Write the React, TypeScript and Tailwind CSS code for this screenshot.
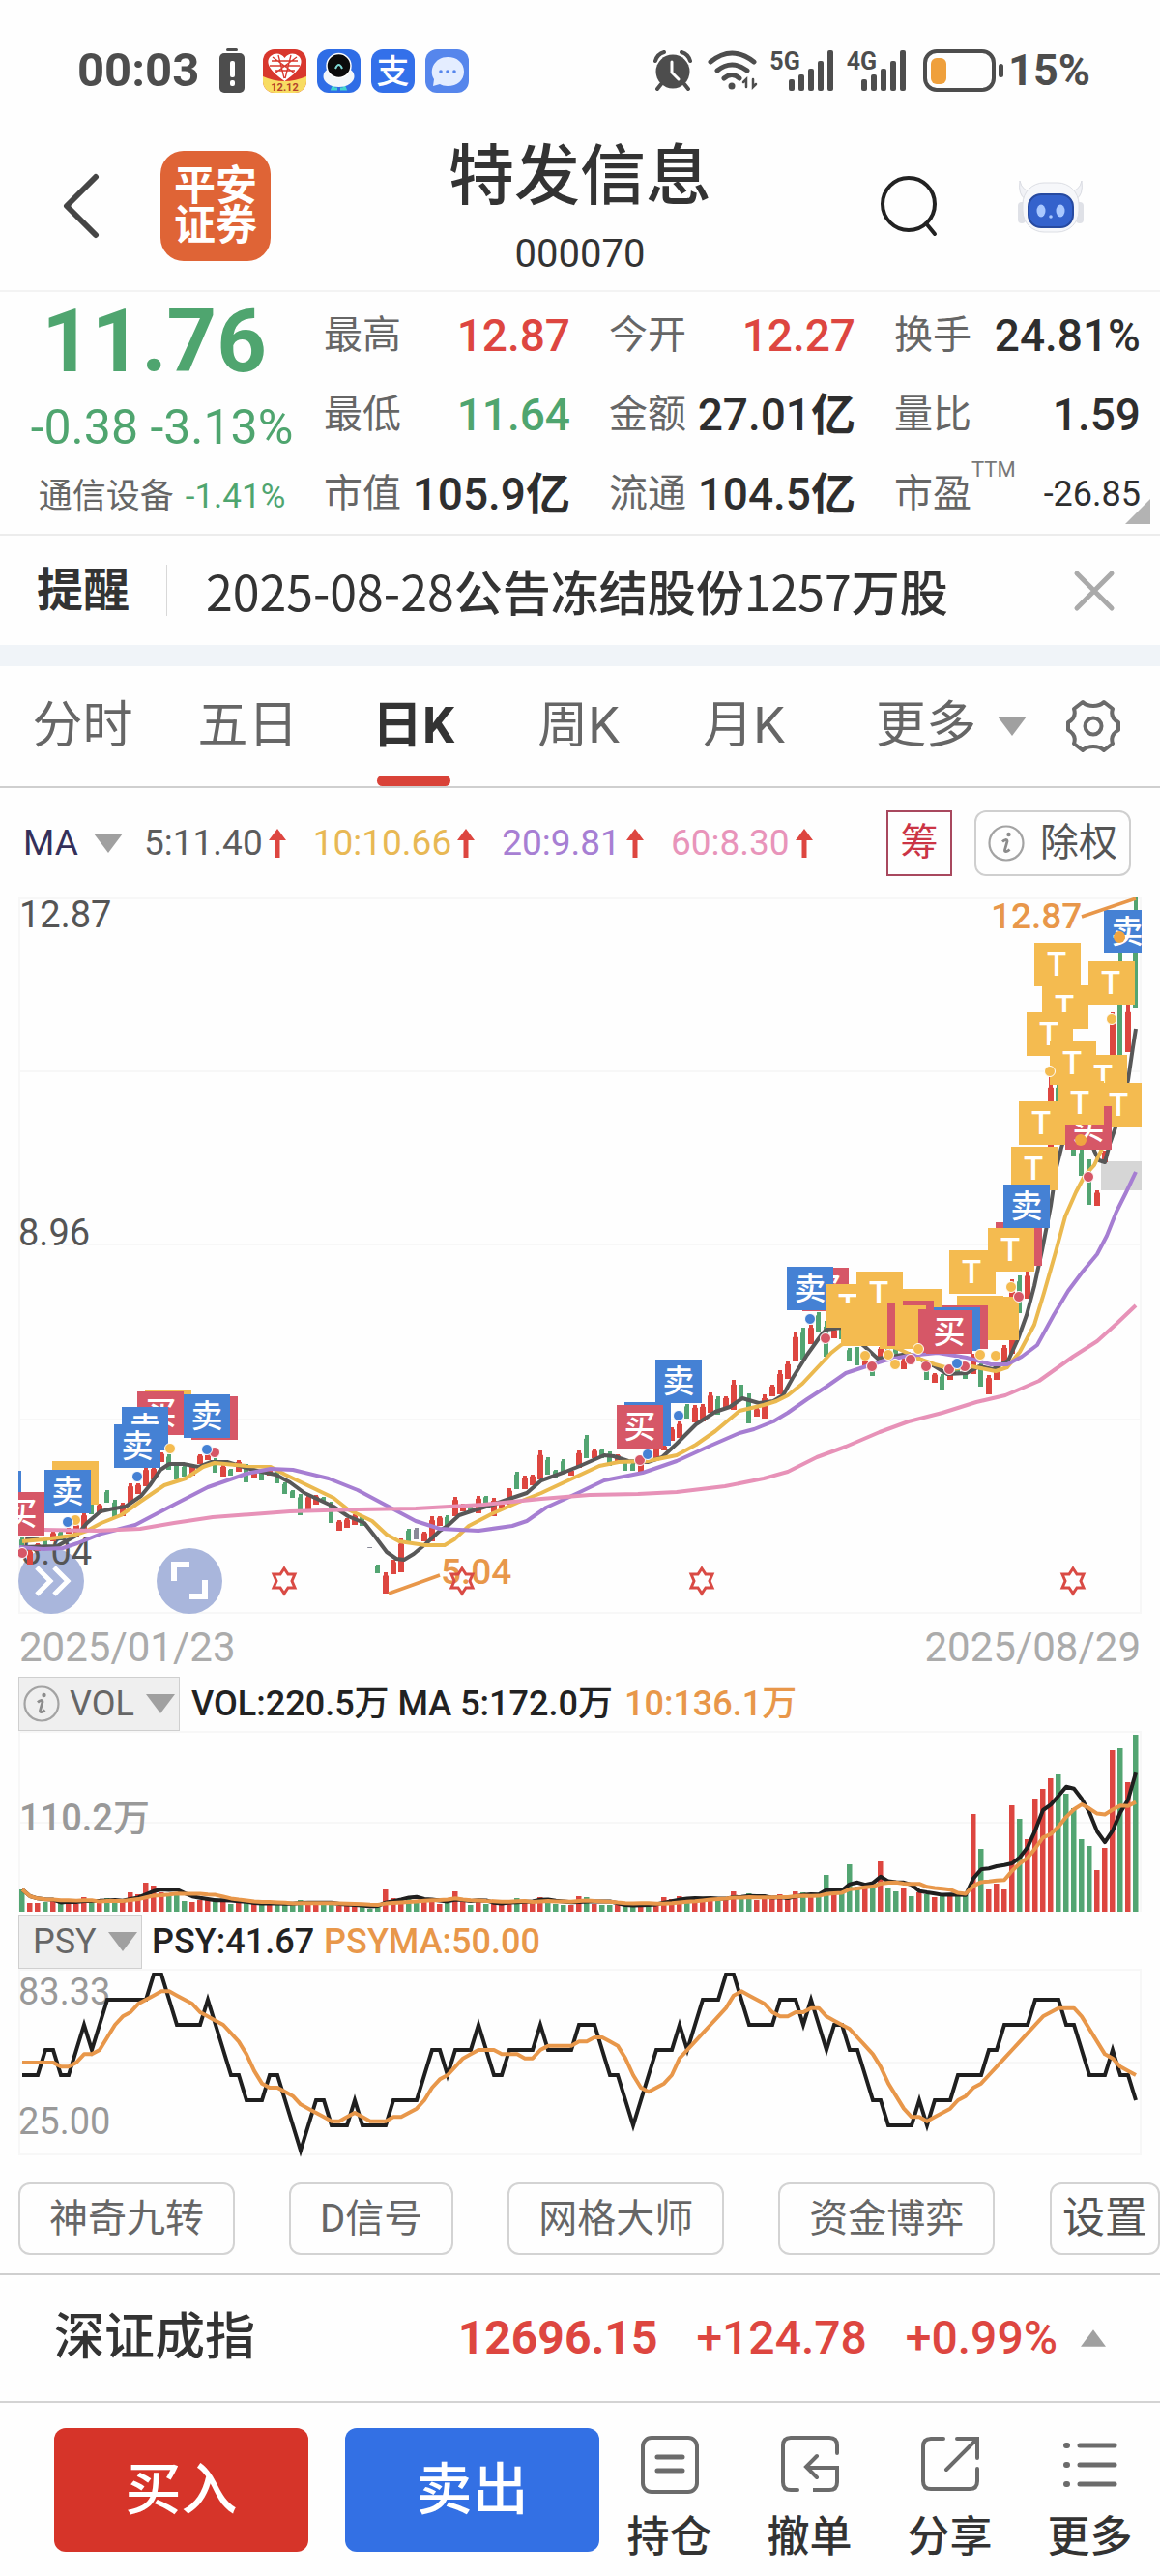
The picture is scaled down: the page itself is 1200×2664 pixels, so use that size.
import { useState } from "react";

const RED = "#dd4640";
const GREEN = "#53a572";
const ORANGE = "#e8974a";
const YELLOW = "#f4bb50";

const toneClass: Record<string, string> = {
    up: "text-[#dd4640]",
    down: "text-[#4fa56f]",
    flat: "text-[#2e2e2e]",
};

const stats = [
    { label: "最高", value: "12.87", tone: "up" },
    { label: "今开", value: "12.27", tone: "up" },
    { label: "换手", value: "24.81%", tone: "flat" },
    { label: "最低", value: "11.64", tone: "down" },
    { label: "金额", value: "27.01", unit: "亿", tone: "flat" },
    { label: "量比", value: "1.59", tone: "flat" },
    { label: "市值", value: "105.9", unit: "亿", tone: "flat" },
    { label: "流通", value: "104.5", unit: "亿", tone: "flat" },
    { label: "市盈", value: "-26.85", tone: "flat", note: "TTM", small: true },
];

const tabs = ["分时", "五日", "日K", "周K", "月K"];

const averages = [
    { text: "5:11.40", color: "text-[#5c5c5c]" },
    { text: "10:10.66", color: "text-[#e8b854]" },
    { text: "20:9.81", color: "text-[#a77fd3]" },
    { text: "60:8.30", color: "text-[#e894ba]" },
];

// one row per trading day: direction, top, bottom, volume
type Day = [string, number, number, number];
const days: Day[] = [
    ["g", 1590, 1604, 23], ["r", 1602, 1618, 9], ["r", 1596, 1604, 9], ["g", 1592, 1598, 10], ["r", 1584, 1594, 11],
    ["g", 1584, 1592, 9], ["r", 1580, 1586, 12], ["r", 1575, 1590, 8], ["r", 1564, 1584, 15], ["g", 1556, 1566, 11],
    ["r", 1555, 1565, 10], ["g", 1541, 1554, 14], ["g", 1551, 1569, 10], ["r", 1554, 1568, 11], ["r", 1534, 1554, 20],
    ["r", 1534, 1545, 18], ["r", 1517, 1537, 30], ["r", 1517, 1530, 27], ["r", 1502, 1512, 20], ["g", 1504, 1520, 18],
    ["g", 1513, 1530, 20], ["g", 1515, 1527, 11], ["r", 1514, 1526, 10], ["r", 1504, 1514, 12], ["r", 1504, 1510, 12],
    ["g", 1508, 1523, 14], ["r", 1515, 1527, 11], ["g", 1519, 1526, 8], ["r", 1510, 1522, 9], ["g", 1514, 1533, 9],
    ["r", 1520, 1528, 8], ["g", 1521, 1531, 8], ["r", 1520, 1526, 8], ["g", 1522, 1534, 9], ["g", 1533, 1545, 8],
    ["g", 1541, 1549, 8], ["g", 1545, 1567, 12], ["r", 1546, 1562, 9], ["r", 1546, 1556, 9], ["g", 1548, 1554, 8],
    ["g", 1553, 1575, 8], ["r", 1572, 1583, 6], ["r", 1570, 1580, 6], ["r", 1566, 1577, 7], ["g", 1567, 1578, 5],
    ["n", 1600, 1601, 3], ["g", 1618, 1627, 9], ["r", 1626, 1648, 23], ["r", 1613, 1628, 14], ["r", 1591, 1626, 14],
    ["g", 1581, 1594, 13], ["n", 1580, 1592, 12], ["r", 1584, 1594, 12], ["r", 1568, 1594, 12], ["r", 1568, 1578, 8],
    ["g", 1567, 1579, 9], ["r", 1548, 1568, 21], ["r", 1555, 1563, 10], ["g", 1557, 1564, 7], ["r", 1547, 1565, 12],
    ["g", 1547, 1555, 8], ["r", 1549, 1568, 9], ["r", 1555, 1559, 7], ["r", 1539, 1556, 11], ["g", 1522, 1540, 14],
    ["r", 1526, 1540, 10], ["r", 1525, 1536, 11], ["r", 1500, 1530, 15], ["g", 1507, 1525, 12], ["g", 1520, 1528, 8],
    ["g", 1509, 1523, 7], ["r", 1520, 1526, 7], ["r", 1500, 1518, 16], ["g", 1484, 1508, 15], ["r", 1499, 1508, 8],
    ["g", 1498, 1508, 7], ["g", 1501, 1516, 7], ["r", 1504, 1512, 7], ["g", 1510, 1521, 6], ["g", 1513, 1521, 6],
    ["r", 1512, 1522, 8], ["g", 1506, 1513, 8], ["r", 1497, 1508, 10], ["r", 1495, 1500, 15], ["r", 1476, 1490, 13],
    ["r", 1470, 1487, 16], ["g", 1452, 1467, 13], ["r", 1453, 1471, 13], ["r", 1452, 1470, 14], ["r", 1440, 1461, 14],
    ["g", 1444, 1463, 13], ["r", 1444, 1456, 13], ["r", 1427, 1458, 21], ["g", 1432, 1446, 15], ["g", 1441, 1472, 19],
    ["r", 1456, 1465, 12], ["r", 1442, 1467, 13], ["r", 1432, 1444, 13], ["r", 1417, 1442, 18], ["r", 1408, 1426, 14],
    ["r", 1378, 1408, 21], ["g", 1373, 1406, 20], ["r", 1370, 1390, 17], ["g", 1357, 1378, 17], ["g", 1366, 1403, 38],
    ["r", 1374, 1384, 19], ["g", 1370, 1385, 19], ["g", 1394, 1408, 49], ["g", 1393, 1412, 26], ["r", 1400, 1412, 26],
    ["g", 1415, 1423, 28], ["r", 1393, 1405, 52], ["g", 1385, 1400, 25], ["g", 1385, 1400, 21], ["r", 1405, 1416, 25],
    ["g", 1385, 1395, 16], ["r", 1385, 1395, 20], ["g", 1416, 1427, 18], ["r", 1420, 1430, 15], ["g", 1421, 1437, 18],
    ["r", 1416, 1427, 18], ["g", 1410, 1420, 18], ["g", 1414, 1426, 17], ["r", 1400, 1421, 101], ["g", 1410, 1434, 65],
    ["r", 1422, 1442, 23], ["r", 1410, 1427, 29], ["r", 1391, 1410, 23], ["r", 1323, 1400, 110], ["g", 1319, 1358, 96],
    ["r", 1315, 1343, 75], ["r", 1240, 1260, 117], ["r", 1150, 1180, 127], ["r", 1113, 1187, 138], ["g", 1122, 1140, 142],
    ["g", 1120, 1150, 122], ["g", 1180, 1196, 107], ["g", 1188, 1216, 75], ["g", 1199, 1246, 68], ["r", 1231, 1247, 43],
    ["r", 1190, 1202, 66], ["r", 1047, 1091, 167], ["g", 986, 1091, 169], ["r", 1039, 1088, 134], ["g", 928, 1042, 183],
];

const dayX = (index: number) => 23 + index * 8;
const dayColor = (dir: string) => (dir == "r" ? RED : dir == "g" ? GREEN : "#8a8a98");

const ma5 = "23,1600 59,1599 79,1588 90,1575 104,1563 118,1560 130,1558 146,1547 155,1536 166,1520 175,1514 190,1514 205,1517 218,1512 235,1512 255,1518 270,1522 285,1525 300,1533 315,1544 330,1551 345,1558 360,1568 377,1575 388,1589 400,1605 410,1612 418,1613 428,1607 440,1597 455,1583 463,1578 475,1567 490,1562 510,1556 530,1549 545,1544 560,1531 585,1522 600,1516 625,1505 635,1506 650,1511 670,1512 685,1507 700,1493 720,1473 740,1460 755,1455 768,1446 785,1451 800,1449 810,1443 820,1425 835,1401 850,1380 855,1375 870,1373 895,1393 908,1405 940,1400 967,1413 980,1421 1000,1420 1013,1413 1027,1416 1043,1407 1053,1385 1062,1360 1070,1330 1078,1293 1087,1247 1093,1207 1098,1187 1108,1155 1120,1160 1132,1190 1137,1200 1143,1202 1148,1183 1155,1163 1167,1117 1172,1083 1175,1064";
const ma10 = "23,1594 45,1592 75,1588 90,1583 105,1575 125,1567 145,1553 170,1536 192,1529 210,1517 222,1513 255,1516 280,1517 295,1525 320,1537 345,1549 360,1561 385,1573 400,1587 413,1594 440,1598 460,1598 470,1592 485,1578 510,1565 535,1554 560,1544 590,1530 620,1516 640,1512 670,1511 700,1505 720,1494 740,1480 765,1459 790,1453 803,1449 815,1443 830,1431 845,1415 860,1399 870,1391 885,1385 900,1385 930,1395 950,1405 967,1411 985,1416 1005,1413 1030,1418 1042,1414 1055,1398 1070,1370 1080,1337 1092,1295 1102,1258 1113,1233 1122,1216 1132,1205 1140,1188 1150,1160";
const ma20 = "20,1600 45,1602 65,1601 80,1596 105,1586 140,1577 180,1556 215,1538 255,1524 280,1519 303,1520 340,1529 370,1541 400,1557 430,1573 455,1581 495,1583 530,1578 545,1573 565,1559 600,1543 625,1531 665,1523 700,1511 735,1495 765,1482 780,1478 800,1470 815,1461 835,1447 855,1434 875,1420 890,1415 915,1407 940,1402 970,1399 1000,1404 1025,1411 1042,1411 1057,1403 1073,1391 1090,1360 1105,1335 1120,1315 1135,1297 1145,1278 1155,1253 1165,1233 1175,1212";
const ma60 = "45,1582 100,1583 145,1581 180,1575 220,1569 300,1563 370,1561 430,1560 500,1556 560,1550 610,1546 660,1545 700,1543 750,1537 790,1529 815,1522 845,1507 875,1496 910,1481 940,1470 975,1461 1010,1450 1040,1443 1075,1428 1110,1403 1135,1387 1155,1369 1175,1350";

// trade markers, later ones cover earlier ones; a covered marker draws no letter
type Marker = [string, number, number, boolean?];
const markers: Marker[] = [
    ["卖", -26, 1521, true], ["买", -2, 1543], ["T", 54, 1511, true], ["卖", 46, 1520],
    ["T", 150, 1437, true], ["买", 142, 1439], ["卖", 126, 1455], ["卖", 118, 1473],
    ["买", 198, 1444, true], ["卖", 190, 1442],
    ["卖", 646, 1450, true], ["买", 638, 1453], ["卖", 678, 1406],
    ["买", 830, 1311], ["卖", 814, 1310],
    ["T", 926, 1333, true], ["买", 918, 1345, true], ["T", 910, 1350, true],
    ["T", 854, 1328], ["T", 886, 1315], ["买", 878, 1347, true], ["T", 870, 1347, true],
    ["买", 950, 1354, true],
    ["T", 1006, 1341, true], ["T", 990, 1340, true], ["买", 974, 1350, true], ["卖", 966, 1352, true], ["买", 958, 1355],
    ["T", 982, 1293], ["买", 1030, 1264, true], ["T", 1022, 1270],
    ["T", 1046, 1186], ["卖", 1038, 1225], ["T", 1070, 975], ["T", 1078, 1019], ["T", 1126, 994],
    ["T", 1062, 1047], ["T", 1086, 1077], ["T", 1118, 1091], ["T", 1134, 1120], ["买", 1102, 1144],
    ["T", 1094, 1118], ["T", 1054, 1139], ["卖", 1142, 941],
];
const markerColor: Record<string, string> = { 卖: "#4581d4", 买: "#d65767", T: YELLOW };

type Dot = [string, number, number];
const dots: Dot[] = [
    ["买", 23, 1606], ["T", 78, 1572], ["卖", 70, 1574], ["卖", 142, 1527], ["T", 176, 1498], ["买", 222, 1502], ["卖", 214, 1499],
    ["买", 662, 1510], ["卖", 670, 1504], ["卖", 702, 1464], ["卖", 838, 1364], ["买", 854, 1384],
    ["T", 895, 1402], ["买", 902, 1413], ["T", 919, 1401], ["T", 926, 1411], ["买", 942, 1406], ["T", 950, 1395],
    ["买", 958, 1413], ["买", 982, 1416], ["买", 998, 1413], ["卖", 990, 1410], ["T", 1014, 1401], ["T", 1030, 1402],
    ["T", 1046, 1331], ["买", 1054, 1341], ["买", 1126, 1217], ["T", 1150, 1054], ["T", 1086, 1108],
];

// [day, level], level 0 is the top line
const psyTurns = [
    [0, 4], [2, 4], [3, 3], [4, 3], [5, 4], [6, 4], [8, 2], [9, 3], [11, 1], [16, 1], [17, 0], [18, 0], [20, 2], [23, 2], [24, 1],
    [27, 4], [28, 4], [29, 5], [31, 5], [32, 4], [33, 4], [36, 7], [38, 5], [39, 5], [40, 6], [42, 6], [43, 5], [44, 6], [47, 6],
    [48, 5], [51, 5], [53, 3], [54, 3], [55, 4], [56, 3], [58, 3], [59, 2], [61, 4], [62, 4], [63, 3], [66, 3], [67, 2], [68, 3],
    [71, 3], [72, 2], [74, 2], [76, 4], [77, 4], [79, 6], [82, 3], [84, 3], [85, 2], [86, 3], [88, 1], [90, 1], [91, 0], [92, 0],
    [94, 2], [97, 2], [98, 1], [100, 1], [101, 2], [102, 1], [104, 3], [105, 2], [106, 2], [107, 3], [108, 3], [110, 5], [111, 5],
    [112, 6], [115, 6], [116, 5], [117, 6], [118, 5], [120, 5], [121, 4], [124, 4], [125, 3], [126, 3], [127, 2], [130, 2],
    [131, 1], [134, 1], [135, 2], [136, 2], [138, 4], [140, 4], [141, 3], [142, 4], [143, 4], [144, 5],
];

const psy = days.map((_, index) => {
    const next = psyTurns.findIndex((turn) => turn[0] >= index);
    const [d1, l1] = psyTurns[next];
    if (d1 == index) return l1;
    const [d0, l0] = psyTurns[next - 1];
    return l0 + ((l1 - l0) * (index - d0)) / (d1 - d0);
});

function average(values: number[], span: number) {
    return values.map((_, index) => {
        const part = values.slice(Math.max(0, index - span + 1), index + 1);
        return part.reduce((sum, value) => sum + value, 0) / part.length;
    });
}

const toPoints = (values: number[], toY: (value: number) => number) =>
    values.map((value, index) => `${dayX(index)},${toY(value)}`).join(" ");

const volumes = days.map((day) => day[3]);
const volumeY = (value: number) => 1977 - value;
const psyY = (level: number) => 2042 + level * 26;
const psyAverage = average(psy, 6).map((value, index) => (index < 5 ? 3.5 : value));

function Triangle({ up = false }: { up?: boolean }) {
    return (
        <svg viewBox="0 0 30 20" className={up ? "w-[26px] h-[18px] shrink-0" : "w-[30px] h-5 shrink-0"} aria-hidden="true">
            <path d={up ? "M0 20L15 0L30 20Z" : "M0 0H30L15 20Z"} fill="#a0a0a0" />
        </svg>
    );
}

function InfoIcon() {
    return (
        <svg viewBox="0 0 38 38" className="w-[38px] h-[38px] shrink-0" fill="none" aria-hidden="true">
            <circle cx="19" cy="19" r="17.5" stroke="#a3a3a3" strokeWidth="2.2" />
            <circle cx="21.5" cy="10" r="2.2" fill="#8c8c8c" />
            <path d="M15 17.5C17 15.5 20 14.5 20 17L17.5 26C17 28.5 20 28 22.5 25.5" stroke="#8c8c8c" strokeWidth="2.8" />
        </svg>
    );
}

function SignalBars() {
    return (
        <svg viewBox="0 0 48 42" className="w-12 h-[42px]" aria-hidden="true">
            <g fill="#4d4d4d">
                <rect x="0" y="30" width="6" height="12" rx="2" />
                <rect x="10" y="25" width="6" height="17" rx="2" />
                <rect x="20" y="19" width="6" height="23" rx="2" />
                <rect x="30" y="11" width="6" height="31" rx="2" />
                <rect x="40" y="0" width="6" height="42" rx="2" />
            </g>
        </svg>
    );
}

function StatusBar() {
    return (
        <div className="flex items-center justify-between pl-20 pr-[72px] pt-12 h-[98px] text-[#4d4d4d]">
            <div className="flex items-center gap-[11px]">
                <span className="text-[49px] leading-[50px] font-bold mr-2.5">00:03</span>
                <svg viewBox="0 0 26 46" className="w-[26px] h-[46px] mr-2" aria-hidden="true">
                    <rect x="7" y="0" width="12" height="3" rx="1.5" fill="#4d4d4d" />
                    <rect x="0" y="5" width="26" height="41" rx="5" fill="#4d4d4d" />
                    <rect x="11" y="13" width="5" height="17" rx="2" fill="#fff" />
                    <rect x="11" y="33" width="5" height="6" rx="2" fill="#fff" />
                </svg>
                <svg viewBox="0 0 45 45" className="w-[45px] h-[45px] rounded-xl" aria-hidden="true">
                    <rect width="45" height="45" fill="#d8372d" />
                    <path d="M0 28Q22 38 45 28V45H0Z" fill="#f8dc62" />
                    <path d="M22.500 33C4 20 3 12 8 7C13 3 19 4 22.500 9C26 4 32 3 37 7C42 12 41 20 22.500 33Z" fill="#fff" />
                    <path d="M9 12H36M7 17H38M12 22H33M16 6L22 30M29 6L23 30M10 8L33 25M35 8L12 25" stroke="#d8372d" strokeWidth="1.300" />
                    <text x="22.500" y="43" textAnchor="middle" fontSize="11" fontWeight="700" fill="#b3432c">12.12</text>
                </svg>
                <svg viewBox="0 0 45 45" className="w-[45px] h-[45px] rounded-xl" aria-hidden="true">
                    <rect width="45" height="45" fill="#2f6de6" />
                    <path d="M18 36L16 41H21M27 36L29 41H24" stroke="#43d4cf" strokeWidth="3" fill="none" />
                    <ellipse cx="22.500" cy="28" rx="16" ry="11" fill="#f3f7fa" />
                    <circle cx="22.500" cy="17" r="12.500" fill="#0c0c0c" stroke="#fff" strokeWidth="1.500" />
                    <path d="M19 20Q22.500 12 26 20" stroke="#7fd9d5" strokeWidth="2" fill="none" />
                </svg>
                <svg viewBox="0 0 45 45" className="w-[45px] h-[45px] rounded-xl" aria-hidden="true">
                    <rect width="45" height="45" fill="#3370ea" />
                    <text x="22.500" y="35" textAnchor="middle" fontSize="34" fontWeight="500" fill="#fff">支</text>
                </svg>
                <svg viewBox="0 0 45 45" className="w-[45px] h-[45px] rounded-xl" aria-hidden="true">
                    <rect width="45" height="45" fill="#5686ec" />
                    <path d="M23 8C33 8 40 14 40 23C40 32 33 38 23 38C20 38 17 37 15 36L8 38L9 31C3 21 10 8 23 8Z" fill="#e4edff" />
                    <g fill="#5686ec">
                        <circle cx="16" cy="23" r="1.800" />
                        <circle cx="23" cy="23" r="1.800" />
                        <circle cx="30" cy="23" r="1.800" />
                    </g>
                </svg>
            </div>
            <div className="flex items-center">
                <svg viewBox="0 0 40 42" className="w-10 h-[42px] mr-4" fill="none" stroke="#4d4d4d" aria-hidden="true">
                    <circle cx="20" cy="22" r="17.500" fill="#4d4d4d" stroke="none" />
                    <path d="M2 11Q4 4 11 2M38 11Q36 4 29 2" strokeWidth="4" strokeLinecap="round" />
                    <path d="M8 35L4 40M32 35L36 40" strokeWidth="4" strokeLinecap="round" />
                    <path d="M19 12V23L26 30" stroke="#fff" strokeWidth="3" strokeLinecap="round" />
                </svg>
                <svg viewBox="0 0 52 42" className="w-[52px] h-[42px] mr-3" fill="none" stroke="#4d4d4d" strokeWidth="5" strokeLinecap="round" aria-hidden="true">
                    <path d="M3 12Q25 -6 48 12" />
                    <path d="M10 21Q25 9 41 21" />
                    <path d="M17 29Q25 22 33 29" />
                    <circle cx="25" cy="37" r="3.500" fill="#4d4d4d" stroke="none" />
                    <path d="M40 38V30L37 33M47 30V38L50 35" strokeWidth="2.500" />
                </svg>
                <div className="flex items-start">
                    <span className="text-[25px] leading-6 font-bold">5G</span>
                    <div className="-ml-3"><SignalBars /></div>
                </div>
                <div className="flex items-start ml-3">
                    <span className="text-[25px] leading-6 font-bold">4G</span>
                    <div className="-ml-4"><SignalBars /></div>
                </div>
                <svg viewBox="0 0 84 44" className="w-[84px] h-11 ml-4 mr-1" fill="none" aria-hidden="true">
                    <rect x="2" y="2" width="71" height="40" rx="12" stroke="#4d4d4d" strokeWidth="4" />
                    <rect x="8" y="9" width="16" height="27" rx="6" fill="#efa03c" />
                    <rect x="78" y="15" width="5" height="14" rx="2.500" fill="#4d4d4d" />
                </svg>
                <span className="text-[45px] leading-[50px] font-bold">15%</span>
            </div>
        </div>
    );
}

function Header() {
    return (
        <header className="grid grid-cols-[1fr_auto_1fr] items-center px-[58px] pt-[43px] pb-[15px] border-b-2 border-[#f3f3f3]">
            <div className="flex items-center gap-[62px]">
                <button aria-label="返回" className="cursor-pointer">
                    <svg viewBox="0 0 46 68" className="w-[46px] h-[68px]" fill="none" aria-hidden="true">
                        <path d="M41 4L11 34L41 64" stroke="#454545" strokeWidth="6" strokeLinecap="round" strokeLinejoin="round" />
                    </svg>
                </button>
                <a href="#home" className="flex flex-col items-center justify-center w-[114px] h-[114px] rounded-3xl bg-[#df6436] text-white text-[43px] leading-[41px] font-bold">
                    <span>平安</span>
                    <span>证券</span>
                </a>
            </div>
            <div className="text-center text-[#333]">
                <h1 className="text-[68px] leading-[84px] font-medium">特发信息</h1>
                <p className="mt-4 text-[40px] leading-[44px]">000070</p>
            </div>
            <div className="flex items-center justify-end gap-20 pr-5">
                <button aria-label="搜索" className="cursor-pointer">
                    <svg viewBox="0 0 62 64" className="w-[62px] h-16" fill="none" stroke="#222" strokeWidth="4" aria-hidden="true">
                        <circle cx="30" cy="30" r="27" />
                        <path d="M48 50L57 61" strokeLinecap="round" />
                    </svg>
                </button>
                <button aria-label="助手" className="cursor-pointer">
                    <svg viewBox="0 0 70 58" className="w-[70px] h-[58px]" aria-hidden="true">
                        <path d="M3 3Q5 14 18 15L9 22Q1 18 3 3ZM67 3Q65 14 52 15L61 22Q69 18 67 3Z" fill="#f1f2f6" stroke="#d9dbe2" />
                        <rect x="1" y="25" width="8" height="22" rx="4" fill="#dfe1e7" />
                        <rect x="61" y="25" width="8" height="22" rx="4" fill="#dfe1e7" />
                        <rect x="6" y="5" width="58" height="51" rx="22" fill="#f6f7fa" stroke="#dcdee4" />
                        <rect x="12" y="17" width="46" height="34" rx="13" fill="#3462cc" stroke="#274aa0" strokeWidth="2" />
                        <ellipse cx="25" cy="34" rx="4.500" ry="6.500" fill="#a9c8ff" />
                        <ellipse cx="45" cy="34" rx="4.500" ry="6.500" fill="#a9c8ff" />
                        <circle cx="35" cy="40" r="1.800" fill="#a9c8ff" />
                    </svg>
                </button>
            </div>
        </header>
    );
}

function Quote() {
    return (
        <section className="relative flex pt-1 border-b-2 border-[#ececec]">
            <div className="w-[335px] shrink-0 text-center text-[#4fa56f]">
                <div className="pr-4 text-[90px] leading-[96px] font-bold">11.76</div>
                <div className="text-[50px] leading-[80px]">-0.38 -3.13%</div>
                <div className="text-[35px] leading-[64px]">
                    <span className="text-[#666] mr-3">通信设备</span>
                    -1.41%
                </div>
            </div>
            <dl className="flex-1 grid grid-cols-3 gap-x-10 pr-5">
                {stats.map((stat) => (
                    <div key={stat.label} className="flex items-center justify-between leading-[82px] whitespace-nowrap">
                        <dt className="relative text-[40px] text-[#666]">
                            {stat.label}
                            {stat.note && <span className="absolute left-full top-0 text-[22px] leading-8 text-[#777]">{stat.note}</span>}
                        </dt>
                        <dd className={`${toneClass[stat.tone]} ${stat.small ? "text-[36px]" : "text-[46px] font-medium"}`}>
                            {stat.value}
                            {stat.unit && <span className="font-bold">{stat.unit}</span>}
                        </dd>
                    </div>
                ))}
            </dl>
            <svg viewBox="0 0 26 26" className="absolute right-[10px] bottom-[10px] w-[26px] h-[26px]" aria-hidden="true">
                <path d="M26 0V26H0Z" fill="#b3b3b3" />
            </svg>
        </section>
    );
}

function Notice() {
    return (
        <section className="flex items-center pl-[38px] pr-[46px] leading-[113px] text-[#333]">
            <strong className="text-[48px] font-bold">提醒</strong>
            <div className="w-px h-[53px] bg-[#d8d8d8] ml-[38px] mr-10"></div>
            <p className="flex-1 text-[50px] font-['Noto_Sans_CJK_SC',sans-serif]">
                2025-08-28<span className="font-medium">公告冻结股份</span>1257<span className="font-medium">万股</span>
            </p>
            <button aria-label="关闭" className="cursor-pointer">
                <svg viewBox="0 0 44 44" className="w-11 h-11" aria-hidden="true">
                    <path d="M4 4L40 40M40 4L4 40" stroke="#aaa" strokeWidth="5" strokeLinecap="round" />
                </svg>
            </button>
        </section>
    );
}

function PeriodTabs() {
    const [activeTab, setActiveTab] = useState("日K");

    return (
        <nav className="flex items-stretch pr-10 border-b-2 border-[#cfcfcf] text-[52px] leading-[124px] text-[#666]">
            {tabs.map((tab) => (
                <button
                    key={tab}
                    onClick={() => setActiveTab(tab)}
                    className={`relative w-[171px] shrink-0 cursor-pointer ${activeTab == tab ? "font-bold text-[#333]" : ""}`}
                >
                    {tab}
                    {activeTab == tab && <span className="absolute bottom-0 left-1/2 -translate-x-1/2 w-[76px] h-[11px] rounded-full bg-[#d94238]"></span>}
                </button>
            ))}
            <button className="flex items-center gap-[22px] ml-auto mr-10 cursor-pointer">
                更多
                <Triangle />
            </button>
            <button aria-label="图表设置" className="cursor-pointer">
                <svg viewBox="0 0 58 58" className="w-[58px] h-[58px]" fill="none" stroke="#6b6b6b" strokeWidth="4" strokeLinejoin="round" aria-hidden="true">
                    <path d="M18 4Q22 8 29 8Q36 8 40 4L49 11Q46 20 55 25V33Q46 38 49 47L40 54Q36 50 29 50Q22 50 18 54L9 47Q12 38 3 33V25Q12 20 9 11Z" />
                    <circle cx="29" cy="29" r="8.500" />
                </svg>
            </button>
        </nav>
    );
}

function AverageBar() {
    return (
        <div className="flex items-center pl-6 pr-[30px] h-[113px] text-[37px] whitespace-nowrap">
            <label className="flex items-center gap-4 mr-[22px]">
                <select aria-label="主图指标" className="appearance-none text-[#34305a] cursor-pointer">
                    <option>MA</option>
                </select>
                <Triangle />
            </label>
            <div className="flex gap-7">
                {averages.map((item) => (
                    <span key={item.text} className={`flex items-center gap-1.5 ${item.color}`}>
                        {item.text}
                        <svg viewBox="0 0 18 30" className="w-[18px] h-[30px]" aria-hidden="true">
                            <path d="M9 0L18 12H11.500V30H6.500V12H0Z" fill={RED} />
                        </svg>
                    </span>
                ))}
            </div>
            <button className="ml-auto w-[68px] h-[68px] border-2 border-[#a8485e] text-[39px] text-[#cb3445] cursor-pointer">筹</button>
            <button className="flex items-center gap-4 h-[68px] ml-[23px] px-3 border-2 border-[#cfcfcf] rounded-xl text-[40px] text-[#555] cursor-pointer">
                <InfoIcon />
                除权
            </button>
        </div>
    );
}

function PriceChart() {
    return (
        <svg viewBox="0 928 1200 746" className="block w-full h-auto" fill="none" role="img" aria-label="日K线">
            <defs>
                <clipPath id="plot">
                    <rect x="19" y="928" width="1162" height="746" />
                </clipPath>
            </defs>
            <path d="M19 929H1181M19 1108H1181M19 1287H1181M19 1468H1181M19 1668H1181M20 928V1668M1180 928V1668" stroke="#f7f7f7" strokeWidth="2" />
            <rect x="1139" y="1201" width="42" height="30" fill="#d6d6d6" />

            <g fill="#a9b6dc">
                <circle cx="53" cy="1635" r="34" />
                <circle cx="196" cy="1635" r="34" />
            </g>
            <path d="M38 1621L52 1635L38 1649M56 1621L70 1635L56 1649" stroke="#fff" strokeWidth="5" />
            <path d="M180 1635V1618H196M212 1634V1651H196" stroke="#fff" strokeWidth="6" />

            <g fill="#555" fontSize="38">
                <text x="20" y="959">12.87</text>
                <text x="19" y="1288">8.96</text>
                <text x="21" y="1618">5.04</text>
            </g>

            {days.map(([dir, top, bottom], index) => {
                const x = dayX(index);
                const inset = (bottom - top) * 0.16;
                return (
                    <g key={index} fill={dayColor(dir)}>
                        <rect x={x - 2} y={top} width="4" height={bottom - top} />
                        <rect x={x - 3} y={top + inset} width={dir == "r" ? 6 : 5} height={bottom - top - inset} />
                    </g>
                );
            })}

            <g strokeWidth="4" strokeLinejoin="round">
                <polyline points={ma5} stroke="#585858" />
                <polyline points={ma10} stroke="#ebb94f" />
                <polyline points={ma20} stroke="#a67ed2" />
                <polyline points={ma60} stroke="#e792b8" />
            </g>

            <g clipPath="url(#plot)">
                {markers.map(([label, x, y, covered], index) => (
                    <g key={index}>
                        <rect x={x} y={y} width="48" height="45" fill={markerColor[label]} />
                        {!covered && (
                            <text x={x + (label == "T" ? 23 : 24)} y={y + 34} textAnchor="middle" fontSize="33" fontWeight="500" fill="#fff">{label}</text>
                        )}
                    </g>
                ))}
                {dots.map(([label, cx, cy], index) => (
                    <circle key={index} cx={cx} cy={cy} r="5.500" fill={markerColor[label]} stroke="#fff" strokeWidth="1" />
                ))}
                <circle cx="1118" cy="1179" r="6" fill="#f0a540" />
                <circle cx="1158" cy="969" r="6" fill="#f0a540" />
            </g>

            <path d="M1119 948L1175 929M402 1648L455 1629" stroke={ORANGE} strokeWidth="3.500" />
            <g fill={ORANGE} fontSize="37" fontWeight="500">
                <text x="1025" y="960">12.87</text>
                <text x="456" y="1638">5.04</text>
            </g>
            {[294, 478, 726, 1110].map((x) => (
                <path
                    key={x}
                    transform={`translate(${x} 1635)`}
                    d="M0 -13L4 -7H11L8 0L11 7H4L0 13L-4 7H-11L-8 0L-11 -7H-4Z"
                    stroke="#d94a44"
                    strokeWidth="3"
                />
            ))}
        </svg>
    );
}

function VolumeChart() {
    return (
        <svg viewBox="0 1790 1200 190" className="block w-full h-auto" fill="none" role="img" aria-label="成交量">
            <path d="M19 1791H1181M19 1885H1181M20 1790V1977M1180 1790V1977" stroke="#f7f7f7" strokeWidth="2" />
            <text x="20" y="1893" fontSize="38" fontWeight="500" fill="#999">110.2万</text>
            {days.map(([dir, , , volume], index) => (
                <rect key={index} x={dayX(index) - 3} y={volumeY(volume)} width="5.500" height={volume} fill={dir == "r" ? RED : GREEN} />
            ))}
            <polyline points={toPoints(average(volumes, 5), volumeY)} stroke="#1f1f1f" strokeWidth="4" strokeLinejoin="round" />
            <polyline points={toPoints(average(volumes, 10), volumeY)} stroke={ORANGE} strokeWidth="4" strokeLinejoin="round" />
        </svg>
    );
}

function PsyChart() {
    return (
        <svg viewBox="0 2036 1200 200" className="block w-full h-auto" fill="none" role="img" aria-label="心理线">
            <path d="M19 2037H1181M19 2133H1181M19 2228H1181M20 2036V2228M1180 2036V2228" stroke="#f7f7f7" strokeWidth="2" />
            <g fill="#999" fontSize="38">
                <text x="19" y="2073">83.33</text>
                <text x="19" y="2207">25.00</text>
            </g>
            <polyline points={toPoints(psy, psyY)} stroke="#1f1f1f" strokeWidth="4" />
            <polyline points={toPoints(psyAverage, psyY)} stroke={ORANGE} strokeWidth="4" strokeLinejoin="round" />
        </svg>
    );
}

function IndicatorSelect({ name, info = false }: { name: string; info?: boolean }) {
    return (
        <label className="flex items-center h-14 px-1 bg-[#efefef] border border-[#cfcfcf] font-normal text-[#666]">
            {info && <InfoIcon />}
            <select aria-label={`${name}指标`} className="appearance-none ml-2.5 mr-3 text-[36px] cursor-pointer">
                <option>{name}</option>
            </select>
            <Triangle />
        </label>
    );
}

const tools = ["神奇九转", "D信号", "网格大师", "资金博弈"];

const actions = [
    {
        name: "持仓",
        icon: (
            <>
                <rect x="2" y="2" width="56" height="56" rx="9" />
                <path d="M17 22H43M17 36H43" strokeWidth="5" strokeLinecap="round" />
            </>
        ),
    },
    {
        name: "撤单",
        icon: (
            <>
                <path d="M58 18V10Q58 2 50 2H10Q2 2 2 10V48Q2 56 10 56H17" strokeLinecap="round" />
                <path d="M27 33H58V48Q58 56 50 56H33" />
                <path d="M37 21L26 32L37 43" strokeLinecap="round" />
            </>
        ),
    },
    {
        name: "分享",
        icon: (
            <>
                <path d="M23 3H10Q2 3 2 11V47Q2 55 10 55H50Q58 55 58 47V34" strokeLinecap="round" />
                <path d="M37 3H58V23M57 4L26 35" strokeLinecap="round" />
            </>
        ),
    },
    {
        name: "更多",
        icon: (
            <>
                <path d="M19 10H55M19 30H55M19 50H55" strokeWidth="5" strokeLinecap="round" />
                <path d="M5 10H6M5 30H6M5 50H6" strokeWidth="6" strokeLinecap="round" />
            </>
        ),
    },
];

export default function App() {
    return (
        <main className="w-full min-h-screen bg-[#fefefe] overflow-x-hidden font-['Roboto','Noto_Sans_CJK_SC',sans-serif]">
            <StatusBar />
            <Header />
            <Quote />
            <Notice />
            <div className="h-[22px] bg-[#f0f4f8]"></div>
            <PeriodTabs />
            <AverageBar />

            <PriceChart />
            <div className="flex justify-between px-5 text-[42px] leading-[60px] text-[#ababab]">
                <span>2025/01/23</span>
                <span>2025/08/29</span>
            </div>

            <div className="flex items-center gap-3 pl-[19px] text-[36px] font-medium text-[#222]">
                <IndicatorSelect name="VOL" info />
                <span>VOL:220.5万 MA 5:172.0万</span>
                <span className="text-[#e8974a]">10:136.1万</span>
            </div>
            <VolumeChart />

            <div className="flex items-center gap-2.5 pl-[19px] text-[36px] font-medium text-[#222]">
                <IndicatorSelect name="PSY" />
                <span>PSY:41.67</span>
                <span className="text-[#e8974a]">PSYMA:50.00</span>
            </div>
            <PsyChart />

            <div className="flex items-center justify-between pl-[19px] pt-[21px] pb-[19px] border-b-2 border-[#cfcfcf]">
                <div className="flex gap-14">
                    {tools.map((tool) => (
                        <button key={tool} className="px-[30px] border-2 border-[#d3d3d3] rounded-xl text-[40px] leading-[71px] text-[#666] cursor-pointer">
                            {tool}
                        </button>
                    ))}
                </div>
                <button className="px-[11px] border-2 border-[#d3d3d3] rounded-xl text-[44px] leading-[71px] text-[#555] cursor-pointer">设置</button>
            </div>

            <div className="flex items-center pl-14 pr-14 border-b-2 border-[#d3d3d3] text-[48px] leading-[130px] text-[#dd4640]">
                <span className="text-[52px] font-medium text-[#333]">深证成指</span>
                <span className="ml-auto font-bold">12696.15</span>
                <span className="ml-10 font-medium">+124.78</span>
                <span className="ml-10 mr-6 font-medium">+0.99%</span>
                <Triangle up />
            </div>

            <footer className="flex items-start pl-14 pt-[26px] pb-[25px]">
                <div className="flex gap-[38px] text-[58px] leading-[128px] font-medium text-white">
                    <button className="w-[263px] rounded-xl bg-[#d63429] cursor-pointer">买入</button>
                    <button className="w-[263px] rounded-xl bg-[#3370e4] cursor-pointer">卖出</button>
                </div>
                <div className="flex-1 grid grid-cols-4 pt-2">
                    {actions.map((action) => (
                        <button key={action.name} className="flex flex-col items-center gap-5 text-[44px] leading-[50px] font-medium text-[#333] cursor-pointer">
                            <svg viewBox="0 0 60 60" className="w-[60px] h-[60px]" fill="none" stroke="#6b6b6b" strokeWidth="4" aria-hidden="true">
                                {action.icon}
                            </svg>
                            {action.name}
                        </button>
                    ))}
                </div>
            </footer>
        </main>
    );
}
